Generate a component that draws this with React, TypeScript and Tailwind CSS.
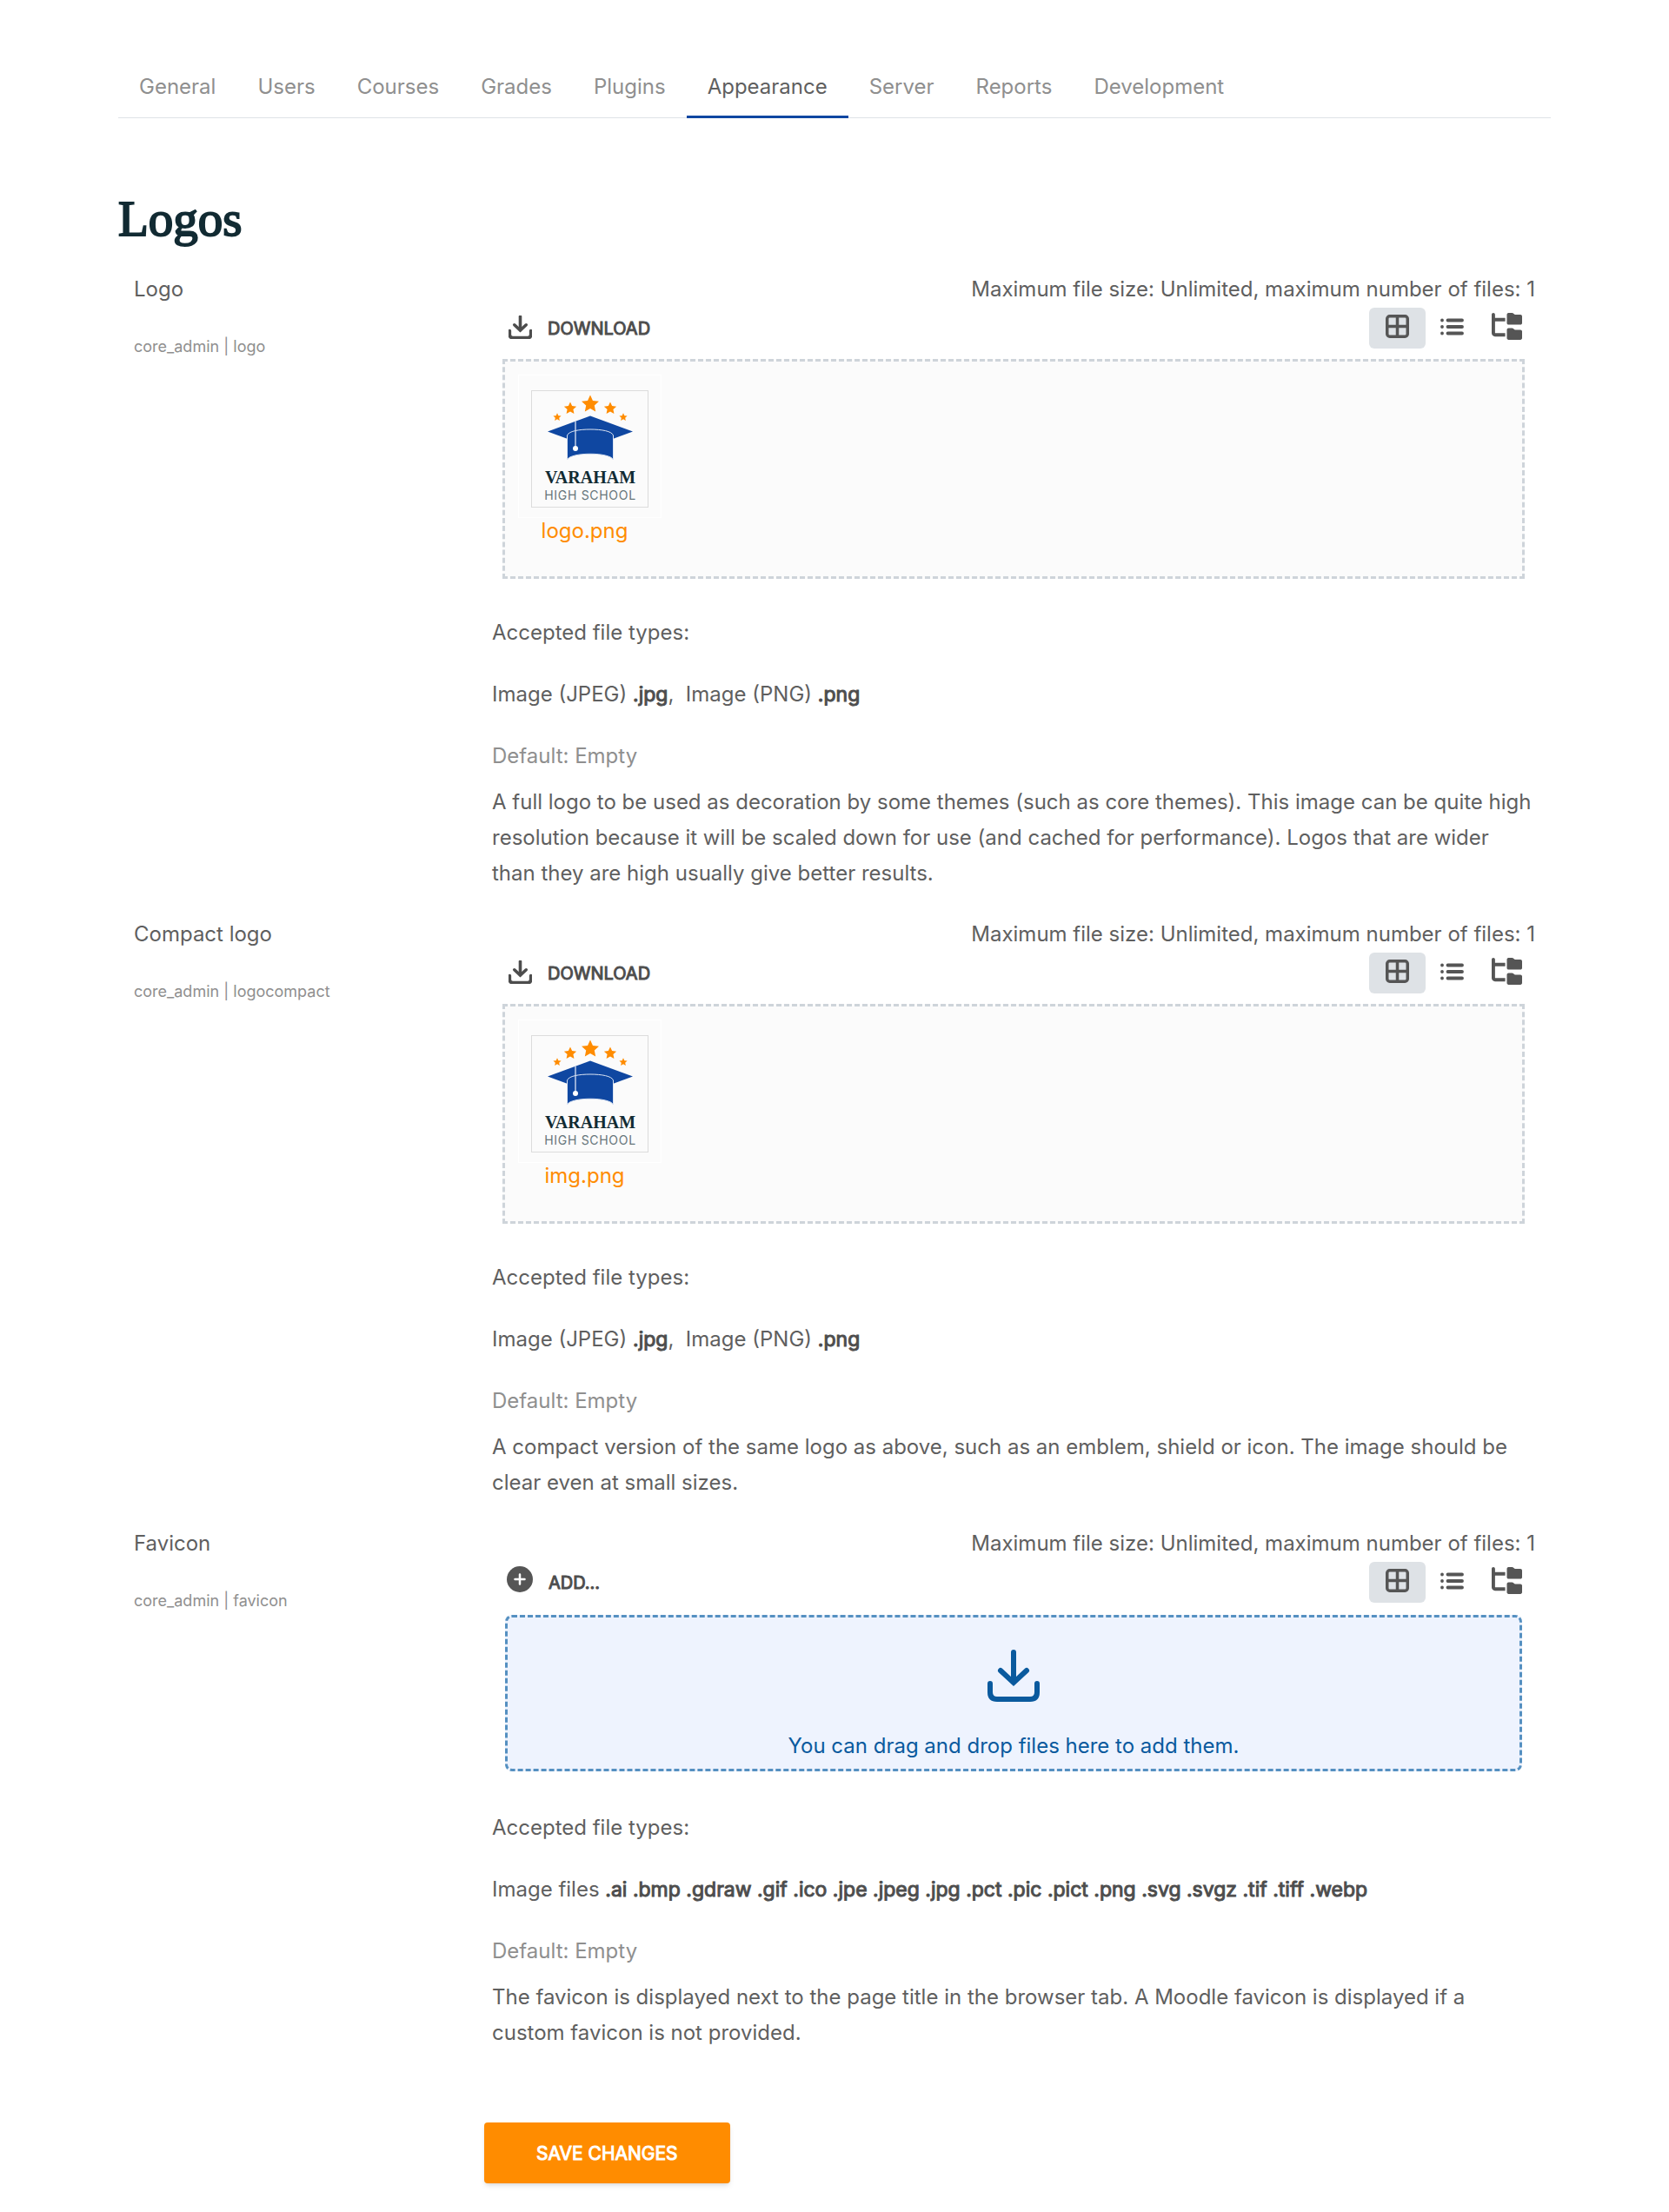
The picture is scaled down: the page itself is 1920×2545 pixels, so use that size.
import { useState } from "react";
import type { ReactNode } from "react";
import { FaFolderTree } from "react-icons/fa6";

const TABS = [
  "General",
  "Users",
  "Courses",
  "Grades",
  "Plugins",
  "Appearance",
  "Server",
  "Reports",
  "Development",
];

interface FileType {
  label: string;
  extensions: string;
}

interface Setting {
  name: string;
  title: string;
  file?: string;
  types: FileType[];
  description: string;
}

const IMAGE_TYPES: FileType[] = [
  { label: "Image (JPEG)", extensions: ".jpg" },
  { label: "Image (PNG)", extensions: ".png" },
];

const SETTINGS: Setting[] = [
  {
    name: "logo",
    title: "Logo",
    file: "logo.png",
    types: IMAGE_TYPES,
    description:
      "A full logo to be used as decoration by some themes (such as core themes). This image can be quite high resolution because it will be scaled down for use (and cached for performance). Logos that are wider than they are high usually give better results.",
  },
  {
    name: "logocompact",
    title: "Compact logo",
    file: "img.png",
    types: IMAGE_TYPES,
    description:
      "A compact version of the same logo as above, such as an emblem, shield or icon. The image should be clear even at small sizes.",
  },
  {
    name: "favicon",
    title: "Favicon",
    types: [
      {
        label: "Image files",
        extensions:
          ".ai .bmp .gdraw .gif .ico .jpe .jpeg .jpg .pct .pic .pict .png .svg .svgz .tif .tiff .webp",
      },
    ],
    description:
      "The favicon is displayed next to the page title in the browser tab. A Moodle favicon is displayed if a custom favicon is not provided.",
  },
];

export default function App() {
  return (
    <div className="bg-white pt-[79px] pb-8 font-['Inter',sans-serif] text-2xl leading-[41px] text-[#5f5f5f]">
      <div className="mx-auto max-w-[1648px]">
        <nav className="flex border-b border-[#dee2e6]">
          {TABS.map((tab) => (
            <a
              key={tab}
              href="#"
              className={
                tab === "Appearance"
                  ? "-mb-px border-b-3 border-[#0f47a1] px-6 pb-[13px] text-[#5f5f5f]"
                  : "-mb-px border-b-3 border-transparent px-6 pb-[13px] text-[#8f8f8f]"
              }
            >
              {tab}
            </a>
          ))}
        </nav>

        <h1 className="mt-20 mb-6 font-['Liberation_Serif',serif] text-[57px] leading-[72px] text-[#122b33] [-webkit-text-stroke:2px_#122b33]">
          Logos
        </h1>

        <form onSubmit={(e) => e.preventDefault()}>
          {SETTINGS.map((setting) => (
            <SettingRow key={setting.name} setting={setting} />
          ))}
          <div className="flex">
            <div className="w-1/4" />
            <button
              type="submit"
              className="mt-[54px] ml-[9px] h-[70px] rounded-sm bg-[#ff8c00] px-15 text-[21px] text-white uppercase shadow-md [-webkit-text-stroke:1px_#fff]"
            >
              Save changes
            </button>
          </div>
        </form>
      </div>
    </div>
  );
}

function SettingRow({ setting }: { setting: Setting }) {
  return (
    <section className="mb-[29px] flex">
      <div className="w-1/4 shrink-0 px-[18px]">
        <h2>{setting.title}</h2>
        <p className="mt-[30px] text-lg leading-8 text-[#8f8f8f]">
          core_admin | {setting.name}
        </p>
      </div>
      <div className="min-w-0 flex-1 px-[18px]">
        <FileManager file={setting.file} />
        <p className="mt-[41px]">Accepted file types:</p>
        <p className="mt-[30px]">
          {setting.types.map((type, i) => (
            <span key={type.label}>
              {i > 0 && <>,&nbsp; </>}
              {type.label}{" "}
              <strong className="text-[23px] font-normal text-[#4d4d4d] [-webkit-text-stroke:1px_#4d4d4d]">
                {type.extensions}
              </strong>
            </span>
          ))}
        </p>
        <p className="mt-[29px] text-[#8f8f8f]">Default: Empty</p>
        <p className="mt-3">{setting.description}</p>
      </div>
    </section>
  );
}

function FileManager({ file }: { file?: string }) {
  const [view, setView] = useState("icons");

  return (
    <div>
      <p className="text-right">Maximum file size: Unlimited, maximum number of files: 1</p>
      <div className="mt-px ml-3 flex items-start justify-between">
        <button
          type="button"
          className="flex h-12 items-center gap-[18px] pl-[7px] text-xl text-[#4d4d4d] uppercase [-webkit-text-stroke:1px_#4d4d4d]"
        >
          {file ? <TrayIcon className="mb-1 size-[27px]" strokeWidth={8} /> : <PlusIcon />}
          {file ? "Download" : "Add..."}
        </button>
        <div className="flex text-[#555]">
          <ViewButton label="Display folder with file icons" active={view === "icons"} onClick={() => setView("icons")}>
            <GridIcon />
          </ViewButton>
          <ViewButton label="Display folder with file details" active={view === "list"} onClick={() => setView("list")}>
            <ListIcon />
          </ViewButton>
          <ViewButton label="Display folder as file tree" active={view === "tree"} onClick={() => setView("tree")}>
            <FaFolderTree className="h-[31px] w-[35px]" preserveAspectRatio="none" />
          </ViewButton>
        </div>
      </div>

      {file ? (
        <div className="mx-3 mt-[11px] h-[253px] border-3 border-dashed border-[#ced4da] bg-[#fbfbfb] p-[15px]">
          <a href="#" className="block w-[165px] text-center text-[#ff8c00]">
            <div className="flex justify-center border border-white pt-[17px] pb-[11px]">
              <SchoolLogo />
            </div>
            <p className="-mt-1.5 pr-3">{file}</p>
          </a>
        </div>
      ) : (
        <div className="mx-[15px] mt-[13px] mb-11 flex h-[180px] flex-col items-center justify-between rounded-lg border-3 border-dashed border-[#5590c1] bg-[#eef3fe] pt-[37px] pb-[6px] text-[#0a5a9e]">
          <TrayIcon className="size-15" strokeWidth={6} />
          <p>You can drag and drop files here to add them.</p>
        </div>
      )}
    </div>
  );
}

interface ViewButtonProps {
  label: string;
  active: boolean;
  onClick: () => void;
  children: ReactNode;
}

function ViewButton({ label, active, onClick, children }: ViewButtonProps) {
  return (
    <button
      type="button"
      aria-label={label}
      aria-pressed={active}
      onClick={onClick}
      className={
        active
          ? "flex h-[47px] w-[65px] items-center justify-center rounded-md bg-[#dee2e6] pb-1"
          : "flex h-[47px] w-[63px] items-center justify-center rounded-md pr-0.5 pb-1"
      }
    >
      {children}
    </button>
  );
}

function TrayIcon({ className, strokeWidth }: { className: string; strokeWidth: number }) {
  return (
    <svg
      viewBox="0 0 60 60"
      className={className}
      fill="none"
      stroke="currentColor"
      strokeWidth={strokeWidth}
      strokeLinecap="round"
    >
      <path d="M30 3V37" />
      <path d="M15 24L30 38L45 24" />
      <path d="M3 39V49Q3 57 11 57H49Q57 57 57 49V39" />
    </svg>
  );
}

function PlusIcon() {
  return (
    <svg viewBox="0 0 30 30" className="mb-2 -ml-0.5 size-[30px]" stroke="none">
      <circle cx="15" cy="15" r="15" fill="#555" />
      <path d="M15 9.500V20.500M9.500 15H20.500" stroke="#fff" strokeWidth="2.500" strokeLinecap="round" />
    </svg>
  );
}

function GridIcon() {
  return (
    <svg viewBox="0 0 27 27" className="size-[27px]" fill="none" stroke="currentColor" strokeWidth="3.500">
      <rect x="1.750" y="1.750" width="23.500" height="23.500" rx="3" />
      <path d="M13.500 2V25M2 13.500H25" />
    </svg>
  );
}

function ListIcon() {
  return (
    <svg viewBox="0 0 27 20" className="h-5 w-[27px]" stroke="currentColor" strokeWidth="3.800" strokeLinecap="round">
      <path d="M8.500 2.500H25M8.500 10H25M8.500 17.500H25" />
      <path d="M2 2.500H2.010M2 10H2.010M2 17.500H2.010" />
    </svg>
  );
}

const STARS = [
  { x: 67, y: 15, r: 10.5 },
  { x: 44, y: 20, r: 7.5 },
  { x: 90, y: 20, r: 7.5 },
  { x: 29, y: 30, r: 4.8 },
  { x: 105, y: 30, r: 4.8 },
];

function starPoints(x: number, y: number, r: number) {
  return Array.from({ length: 10 }, (_, i) => {
    const radius = i % 2 ? r * 0.48 : r;
    const angle = (Math.PI / 5) * i - Math.PI / 2;
    return `${x + radius * Math.cos(angle)},${y + radius * Math.sin(angle)}`;
  }).join(" ");
}

function SchoolLogo() {
  return (
    <svg viewBox="0 0 133 133" className="box-border size-[135px] border border-[#dcdcdc]">
      {STARS.map((s) => (
        <polygon key={s.x} points={starPoints(s.x, s.y, s.r)} fill="#ff8c00" />
      ))}
      <path d="M67 28.500L116 46.500L67 64.500L18 46.500Z" fill="#0f47a1" />
      <path
        d="M40.500 79V51C42 46 54 44 67 44S92 46 93.500 51V79C90 70 44 70 40.500 79Z"
        fill="#0f47a1"
        stroke="#dbe4f3"
        strokeWidth="1"
      />
      <path d="M50 34.500V64" stroke="#dbe4f3" strokeWidth="1.300" />
      <circle cx="50" cy="66" r="3" fill="#fff" />
      <text
        x="67"
        y="106"
        textAnchor="middle"
        fill="#122b33"
        className="font-['Liberation_Serif',serif] text-[20px] font-bold"
      >
        VARAHAM
      </text>
      <text x="67" y="125" textAnchor="middle" fill="#66757a" className="text-sm tracking-wider">
        HIGH SCHOOL
      </text>
    </svg>
  );
}
